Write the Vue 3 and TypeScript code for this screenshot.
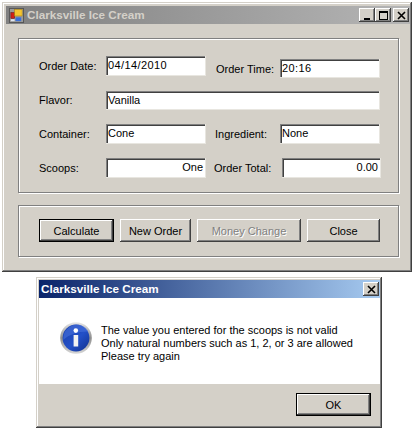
<script setup lang="ts">
interface Field {
  label: string
  value: string
  right?: boolean
  cls?: string
}

const rows: Field[][] = [
  [
    { label: 'Order Date:', value: '04/14/2010', cls: 'spaced' },
    { label: 'Order Time:', value: '20:16', cls: 'low spaced' },
  ],
  [{ label: 'Flavor:', value: 'Vanilla', cls: 'wide' }],
  [{ label: 'Container:', value: 'Cone' }, { label: 'Ingredient:', value: 'None', cls: 'ingredient' }],
  [{ label: 'Scoops:', value: 'One', right: true }, { label: 'Order Total:', value: '0.00', right: true, cls: 'total' }],
]
</script>

<template>
  <div class="page">
    <div class="window main">
      <div class="titlebar inactive">
        <svg class="app-icon" width="15" height="15" viewBox="0 0 16 16">
          <rect x="0.5" y="0.5" width="15" height="15" fill="#9a9a9a" stroke="#555" />
          <rect x="2" y="5" width="4" height="6" fill="#d02018" stroke="#701010" stroke-width="0.6" />
          <rect x="6" y="1.5" width="8" height="7" fill="#f4c430" stroke="#a88010" stroke-width="0.6" />
          <rect x="7" y="10" width="6" height="4" fill="#3a6fd8" />
          <rect x="2" y="12" width="4" height="2" fill="#dfe6f0" />
        </svg>
        <span class="title-text">Clarksville Ice Cream</span>
        <div class="caption-buttons">
          <button class="caption-btn">
            <svg width="9" height="9" viewBox="0 0 9 9"><rect x="1" y="7" width="6" height="2" fill="#000" /></svg>
          </button>
          <button class="caption-btn">
            <svg width="9" height="9" viewBox="0 0 9 9"><path d="M0 0h9v9H0z M1 2v6h7V2z" fill="#000" fill-rule="evenodd" /></svg>
          </button>
          <button class="caption-btn close-gap">
            <svg width="9" height="9" viewBox="0 0 9 9"><path d="M1 1l7 7M8 1L1 8" stroke="#000" stroke-width="1.6" /></svg>
          </button>
        </div>
      </div>

      <div class="group form">
        <div v-for="(row, i) in rows" :key="i" class="row">
          <div v-for="(field, j) in row" :key="field.label" class="field" :class="[field.cls, j === 0 ? 'first' : 'second']">
            <span class="label">{{ field.label }}</span>
            <div class="input" :class="{ right: field.right }">{{ field.value }}</div>
          </div>
        </div>
      </div>

      <div class="group actions">
        <button class="btn default calc">Calculate</button>
        <button class="btn neworder">New Order</button>
        <button class="btn disabled money">Money Change</button>
        <button class="btn closebtn">Close</button>
      </div>
    </div>

    <div class="window dialog">
      <div class="titlebar active">
        <span class="title-text">Clarksville Ice Cream</span>
        <div class="caption-buttons">
          <button class="caption-btn">
            <svg width="9" height="9" viewBox="0 0 9 9"><path d="M1 1l7 7M8 1L1 8" stroke="#000" stroke-width="1.6" /></svg>
          </button>
        </div>
      </div>
      <div class="message">
        <svg class="info-icon" width="32" height="32" viewBox="0 0 32 32">
          <defs>
            <linearGradient id="ring" x1="0" y1="0" x2="0" y2="1">
              <stop offset="0" stop-color="#e8e8e8" />
              <stop offset="0.5" stop-color="#8d8d8d" />
              <stop offset="1" stop-color="#d8d8d8" />
            </linearGradient>
            <linearGradient id="disc" x1="0" y1="0" x2="1" y2="1">
              <stop offset="0" stop-color="#1b3fa8" />
              <stop offset="0.55" stop-color="#2350c8" />
              <stop offset="1" stop-color="#10308c" />
            </linearGradient>
          </defs>
          <circle cx="16" cy="16" r="15.8" fill="url(#ring)" />
          <circle cx="16" cy="16" r="13.4" fill="url(#disc)" />
          <path d="M3.5 18C9 12 20 9 28.5 9.5A13.4 13.4 0 0 0 3.5 18z" fill="#4a74e0" opacity="0.55" />
          <circle cx="15.8" cy="8.6" r="2.3" fill="#fff" />
          <path d="M13.6 13h4.6v11.5h-4.6z" fill="#f2f2f2" />
        </svg>
        <div class="message-text">
          <div>The value you entered for the scoops is not valid</div>
          <div>Only natural numbers such as 1, 2, or 3 are allowed</div>
          <div>Please try again</div>
        </div>
      </div>
      <div class="dialog-footer">
        <button class="btn default ok">OK</button>
      </div>
    </div>
  </div>
</template>

<style scoped>
.page {
  width: 416px;
  height: 430px;
  padding: 2px 0 0 2px;
  box-sizing: border-box;
  background: #fff;
  font-family: "Liberation Sans", Arial, sans-serif;
  font-size: 11px;
  color: #000;
  overflow: hidden;
}

.window {
  box-sizing: border-box;
  background: #d4d0c8;
  box-shadow: inset -1px -1px 0 #404040, inset 1px 1px 0 #d4d0c8, inset -2px -2px 0 #808080, inset 2px 2px 0 #fff;
  display: flex;
  flex-direction: column;
}

.main {
  width: 410px;
  height: 270px;
  padding: 4px 2px 4px 4px;
}

.dialog {
  width: 346px;
  height: 151px;
  margin: 5px 0 0 34px;
  padding: 3px 2px 3px 3px;
}

.titlebar {
  flex: none;
  height: 18px;
  display: flex;
  align-items: center;
  padding: 0 1px 0 2px;
  color: #fff;
  font-weight: 700;
  font-size: 11.7px;
}

.titlebar.inactive {
  background: linear-gradient(90deg, #808080, #b5b5b5);
  color: #d4d0c8;
}

.titlebar.active {
  background: linear-gradient(90deg, #0a246a, #a6caf0);
}

.app-icon {
  margin: 0 3px 0 1px;
}

.title-text {
  flex: 1;
  white-space: nowrap;
  margin-top: -1px;
}

.caption-buttons {
  display: flex;
}

.caption-btn {
  width: 16px;
  height: 14px;
  padding: 0;
  display: flex;
  align-items: center;
  justify-content: center;
  border: 0;
  background: #d4d0c8;
  box-shadow: inset -1px -1px 0 #404040, inset 1px 1px 0 #fff, inset -2px -2px 0 #808080;
}

.close-gap {
  margin-left: 2px;
}

.group {
  box-sizing: border-box;
  border: 1px solid #808080;
  box-shadow: 1px 1px 0 #fff, inset 1px 1px 0 #fff;
  margin-left: 12px;
  width: 381px;
}

.form {
  height: 155px;
  margin-top: 14px;
  padding: 17px 0 0 20px;
  display: flex;
  flex-direction: column;
  gap: 14px;
}

.row {
  display: flex;
  height: 20px;
}

.field {
  display: flex;
  align-items: center;
  height: 20px;
}

.label {
  white-space: nowrap;
}

.first .label {
  width: 67px;
}

.second .label {
  width: 64px;
}

.second {
  margin-left: 10px;
}

.second.ingredient {
  margin-left: 9px;
}

.second.ingredient .label {
  width: 65px;
}

.second.total {
  margin-left: 8px;
}

.second.total .label {
  width: 68px;
}

.second.total .input {
  width: 99px;
}

.second.low {
  margin-top: 3px;
  height: 19px;
}

.second.low .input {
  height: 19px;
}

.input {
  box-sizing: border-box;
  width: 100px;
  height: 20px;
  padding: 0 2px;
  line-height: 18px;
  background: #fff;
  white-space: nowrap;
  box-shadow: inset 1px 1px 0 #808080, inset 2px 2px 0 #404040, 1px 1px 0 #d4d0c8;
  border-right: 1px solid #e8e6e0;
  border-bottom: 1px solid #e8e6e0;
}

.spaced .input {
  letter-spacing: 0.4px;
}

.wide .input {
  width: 274px;
  height: 19px;
}

.input.right {
  text-align: right;
}

.actions {
  height: 52px;
  margin-top: 12px;
  padding: 13px 0 0 20px;
  display: flex;
  gap: 6px;
}

.btn {
  box-sizing: border-box;
  height: 23px;
  padding: 0;
  border: 0;
  background: #d4d0c8;
  font-family: inherit;
  font-size: 11px;
  color: #000;
  box-shadow: inset -1px -1px 0 #404040, inset 1px 1px 0 #fff, inset -2px -2px 0 #808080;
}

.btn.default {
  box-shadow: inset 0 0 0 1px #000, inset -2px -2px 0 #404040, inset 2px 2px 0 #fff, inset -3px -3px 0 #808080;
}

.btn.disabled {
  color: #808080;
  text-shadow: 1px 1px 0 #fff;
}

.calc { width: 75px; }
.neworder { width: 71px; }
.money { width: 104px; }
.closebtn { width: 73px; }

.message {
  flex: none;
  height: 86px;
  background: #fff;
  display: flex;
  align-items: flex-start;
  padding: 24px 0 0 21px;
  box-sizing: border-box;
}

.info-icon {
  flex: none;
  margin-right: 9px;
}

.message-text {
  line-height: 13px;
  margin-top: 2px;
  white-space: nowrap;
}

.dialog-footer {
  flex: 1;
  display: flex;
  justify-content: flex-end;
  padding: 9px 9px 0 0;
}

.ok {
  width: 75px;
}
</style>

<style>
html, body {
  margin: 0;
  background: #fff;
}
</style>
